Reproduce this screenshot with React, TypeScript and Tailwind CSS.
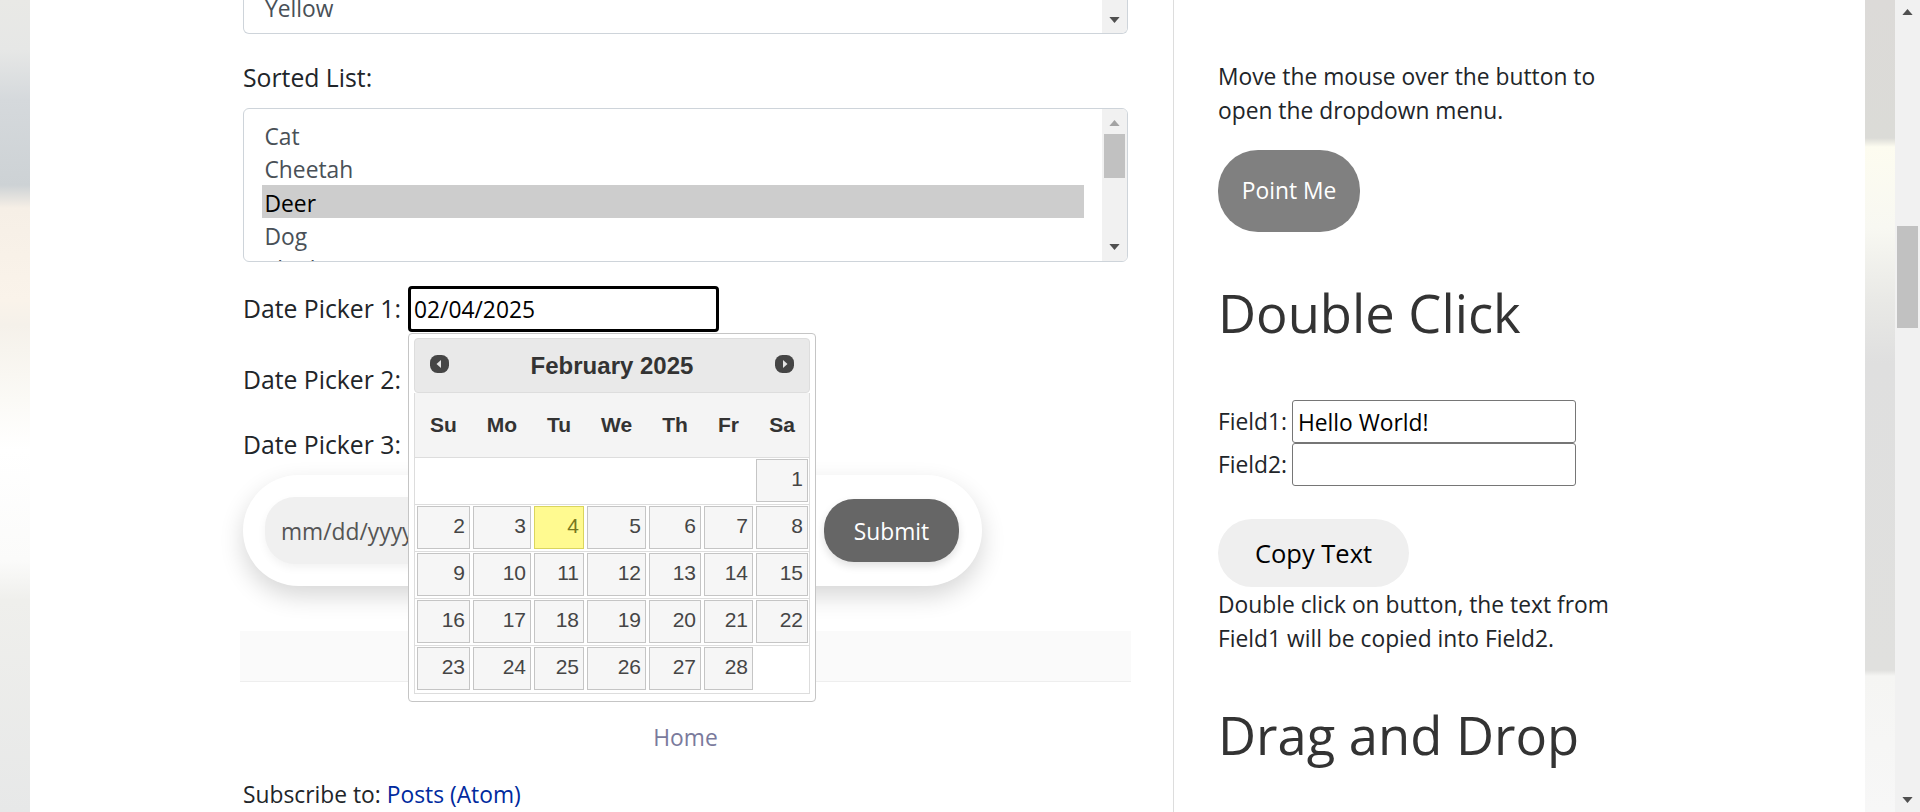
const SORTED_LIST = ['Cat', 'Cheetah', 'Deer', 'Dog']

const WEEKDAYS = ['Su', 'Mo', 'Tu', 'We', 'Th', 'Fr', 'Sa']

const WEEKS: (number | null)[][] = [
  [null, null, null, null, null, null, 1],
  [2, 3, 4, 5, 6, 7, 8],
  [9, 10, 11, 12, 13, 14, 15],
  [16, 17, 18, 19, 20, 21, 22],
  [23, 24, 25, 26, 27, 28, null],
]

function Arrow({ up, className }: { up?: boolean; className: string }) {
  return (
    <svg viewBox="0 0 12 7" className={className} fill="currentColor">
      <path d={up ? 'M6 0 12 7H0Z' : 'M0 0H12L6 7Z'} />
    </svg>
  )
}

function ListScrollbar({ thumb }: { thumb?: boolean }) {
  return (
    <div className="w-[25px] h-full bg-[#f1f1f1] flex flex-col items-center shrink-0">
      {thumb ? (
        <>
          <Arrow up className="w-[11px] h-[6px] mt-[11px] text-[#a3a3a3]" />
          <div className="w-[21px] h-[44px] mt-[8px] bg-[#c1c1c1]" />
          <div className="flex-1" />
          <Arrow className="w-[11px] h-[6px] mb-[11px] text-[#505050]" />
        </>
      ) : (
        <>
          <div className="flex-1" />
          <Arrow className="w-[11px] h-[6px] mb-[10px] text-[#505050]" />
        </>
      )}
    </div>
  )
}

function NavIcon({ next }: { next?: boolean }) {
  return (
    <svg viewBox="0 0 19 18" className="w-[19px] h-[18px] relative -top-[2px]">
      <rect width="19" height="18" rx="7.5" fill="#454545" />
      <path d={next ? 'M8 5v8l4.5-4Z' : 'M11 5v8L6.5 9Z'} fill="#e4e4e4" />
    </svg>
  )
}

function Calendar() {
  return (
    <div className="absolute top-[47px] left-0 z-10 w-[408px] h-[369px] bg-white border border-[#c5c5c5] rounded-[4px] px-[5px] pt-[4px] font-['Liberation_Sans',Arial,sans-serif] leading-normal">
      <div className="h-[55px] bg-[#e9e9e9] border border-[#dddddd] rounded-[4px] flex items-center justify-between px-[15px]">
        <NavIcon />
        <span className="text-[24px] font-bold text-[#333333]">February 2025</span>
        <NavIcon next />
      </div>
      <div className="border-x border-b border-[#dddddd]">
        <div className="h-[65px] bg-[#f4f4f4] border-b border-[#dddddd] grid grid-cols-[53px_58px_50px_59px_52px_49px_52px] gap-x-[3px] pl-[2px] items-center">
          {WEEKDAYS.map(day => (
            <span key={day} className="text-[21px] font-bold text-[#333333] text-center">{day}</span>
          ))}
        </div>
        {WEEKS.map((week, i) => (
          <div
            key={i}
            className="h-[47px] border-b border-[#dddddd] last:border-b-0 grid grid-cols-[53px_58px_50px_59px_52px_49px_52px] gap-x-[3px] pl-[2px] pt-[1px]"
          >
            {week.map((day, j) =>
              day === null ? (
                <span key={j} />
              ) : (
                <span
                  key={j}
                  className={
                    day === 4
                      ? 'h-[43px] border border-[#dad55e] bg-[#fffa90] text-[#777620] text-[21px] text-right pr-[4px] leading-[37px]'
                      : 'h-[43px] border border-[#c5c5c5] bg-[#f6f6f6] text-[#454545] text-[21px] text-right pr-[4px] leading-[37px]'
                  }
                >
                  {day}
                </span>
              ),
            )}
          </div>
        ))}
      </div>
    </div>
  )
}

export default function App() {
  return (
    <div className="h-screen overflow-hidden flex font-['Open_Sans',sans-serif] text-[22.8px] leading-[34px] text-[#212529]">
      {/* background photo, left edge */}
      <div className="w-[30px] shrink-0 bg-[linear-gradient(180deg,#e9e9e6_0px,#e6e7e6_50px,#d5d9dc_100px,#cdd2d5_185px,#f6efe6_208px,#faf3ea_300px,#f5f1ea_325px,#fbfaf6_400px,#ffffff_450px,#fbfbfa_560px,#efefec_600px,#e7e8e8_812px)]" />

      <main className="flex-1 bg-white flex">
        {/* Left column */}
        <div className="w-[1143px] shrink-0 pl-[213px] pr-[45px]">
          <div className="h-[34px] border-x border-b border-[#ced4da] rounded-b-[6px] overflow-hidden flex">
            <div className="flex-1 pl-[21px] -mt-[8px] text-[#495057]">
              <div className="h-[34px]">Yellow</div>
              <div className="h-[34px]">Pink</div>
            </div>
            <ListScrollbar />
          </div>

          <div className="mt-[27px] text-[24.75px]">Sorted List:</div>

          <div className="mt-[13px] h-[154px] border border-[#ced4da] rounded-[6px] overflow-hidden flex">
            <div className="flex-1 pt-[9px] pl-[18px] pr-[18px] text-[#495057]">
              {SORTED_LIST.map(item => (
                <div
                  key={item}
                  className={item === 'Deer' ? 'h-[33.4px] pl-[2.5px] leading-[37px] bg-[#cdcdcd] text-black' : 'h-[33.4px] pl-[2.5px] leading-[37px]'}
                >
                  {item}
                </div>
              ))}
              <div className="h-[33.4px] pl-[2.5px] leading-[35px]">Elephant</div>
            </div>
            <ListScrollbar thumb />
          </div>

          <div className="mt-[24px] flex items-center gap-[5px]">
            <label className="w-[160px] text-[24.75px]">Date Picker 1:</label>
            <div className="relative">
              <input
                readOnly
                value="02/04/2025"
                className="block w-[311px] h-[46px] border-[3px] border-black rounded-[4px] px-[3px] text-black outline-none"
              />
              <Calendar />
            </div>
          </div>

          <div className="mt-[25px] h-[46px] flex items-center text-[24.75px]">Date Picker 2:</div>
          <div className="mt-[19px] h-[46px] flex items-center text-[24.75px]">Date Picker 3:</div>

          <form className="mt-[7px] w-[739px] h-[111px] bg-white rounded-[56px] shadow-[0_10px_25px_rgba(0,0,0,0.16)] flex items-center pl-[22px] pr-[23px] gap-[20px]">
            <input
              readOnly
              placeholder="mm/dd/yyyy"
              className="flex-1 min-w-0 h-[67px] bg-[#f0f0f0] rounded-[30px] pl-[16px] pt-[2px] shadow-[0_4px_8px_rgba(0,0,0,0.05)] placeholder:text-[#555555] outline-none"
            />
            <button type="button" className="w-[135px] h-[63px] pt-[2px] bg-[#666666] text-white rounded-[30px] shadow-[0_4px_8px_rgba(0,0,0,0.12)]">
              Submit
            </button>
          </form>

          <div className="mt-[45px] -mx-[3px] h-[51px] bg-[#fafafa] border-b border-[#eeeeee]" />

          <div className="mt-[39px] text-center text-[#7a7a9c]">Home</div>

          <div className="mt-[23px]">
            Subscribe to: <a className="text-[#002a9e]">Posts (Atom)</a>
          </div>
        </div>

        {/* Right column */}
        <div className="flex-1 border-l border-[#dddddd] pl-[44px]">
          <p className="mt-[60px] w-[420px]">Move the mouse over the button to open the dropdown menu.</p>
          <button type="button" className="mt-[22px] block w-[142px] h-[82px] bg-[#808080] text-white rounded-[40px]">
            Point Me
          </button>
          <h2 className="mt-[41px] text-[52.5px] leading-[80px] text-[#333333]">Double Click</h2>

          <div className="mt-[47px] flex items-center gap-[5px]">
            <label className="w-[69px] pt-[1px]">Field1:</label>
            <input
              readOnly
              value="Hello World!"
              className="w-[284px] h-[43px] border border-[#767676] rounded-[3px] px-[5px] pt-[2px] text-black outline-none"
            />
          </div>
          <div className="flex items-center gap-[5px]">
            <label className="w-[69px] pt-[1px]">Field2:</label>
            <input readOnly className="w-[284px] h-[43px] border border-[#767676] rounded-[3px] px-[5px] outline-none" />
          </div>

          <button type="button" className="mt-[33px] block w-[191px] h-[68px] bg-[#efefef] text-black text-[25.5px] rounded-[34px]">
            Copy Text
          </button>
          <p className="w-[420px] mt-[1px]">Double click on button, the text from Field1 will be copied into Field2.</p>
          <h2 className="mt-[39px] text-[52.5px] leading-[80px] text-[#333333]">Drag and Drop</h2>
        </div>
      </main>

      {/* background photo, right edge */}
      <div className="w-[30px] shrink-0 bg-[linear-gradient(180deg,#dcdad8_0px,#dbdbd7_138px,#fdfcf0_147px,#f8f8f2_228px,#e9e9e6_300px,#dfdfdf_363px,#e0e0de_670px,#f5f5f3_676px,#f7f7f7_812px)]" />

      {/* page scrollbar */}
      <div className="w-[25px] shrink-0 bg-[#f1f1f1] flex flex-col items-center">
        <Arrow up className="w-[11px] h-[6px] mt-[9px] text-[#505050]" />
        <div className="w-[21px] h-[102px] mt-[211px] bg-[#c1c1c1]" />
        <div className="flex-1" />
        <Arrow className="w-[11px] h-[6px] mb-[9px] text-[#505050]" />
      </div>
    </div>
  )
}
